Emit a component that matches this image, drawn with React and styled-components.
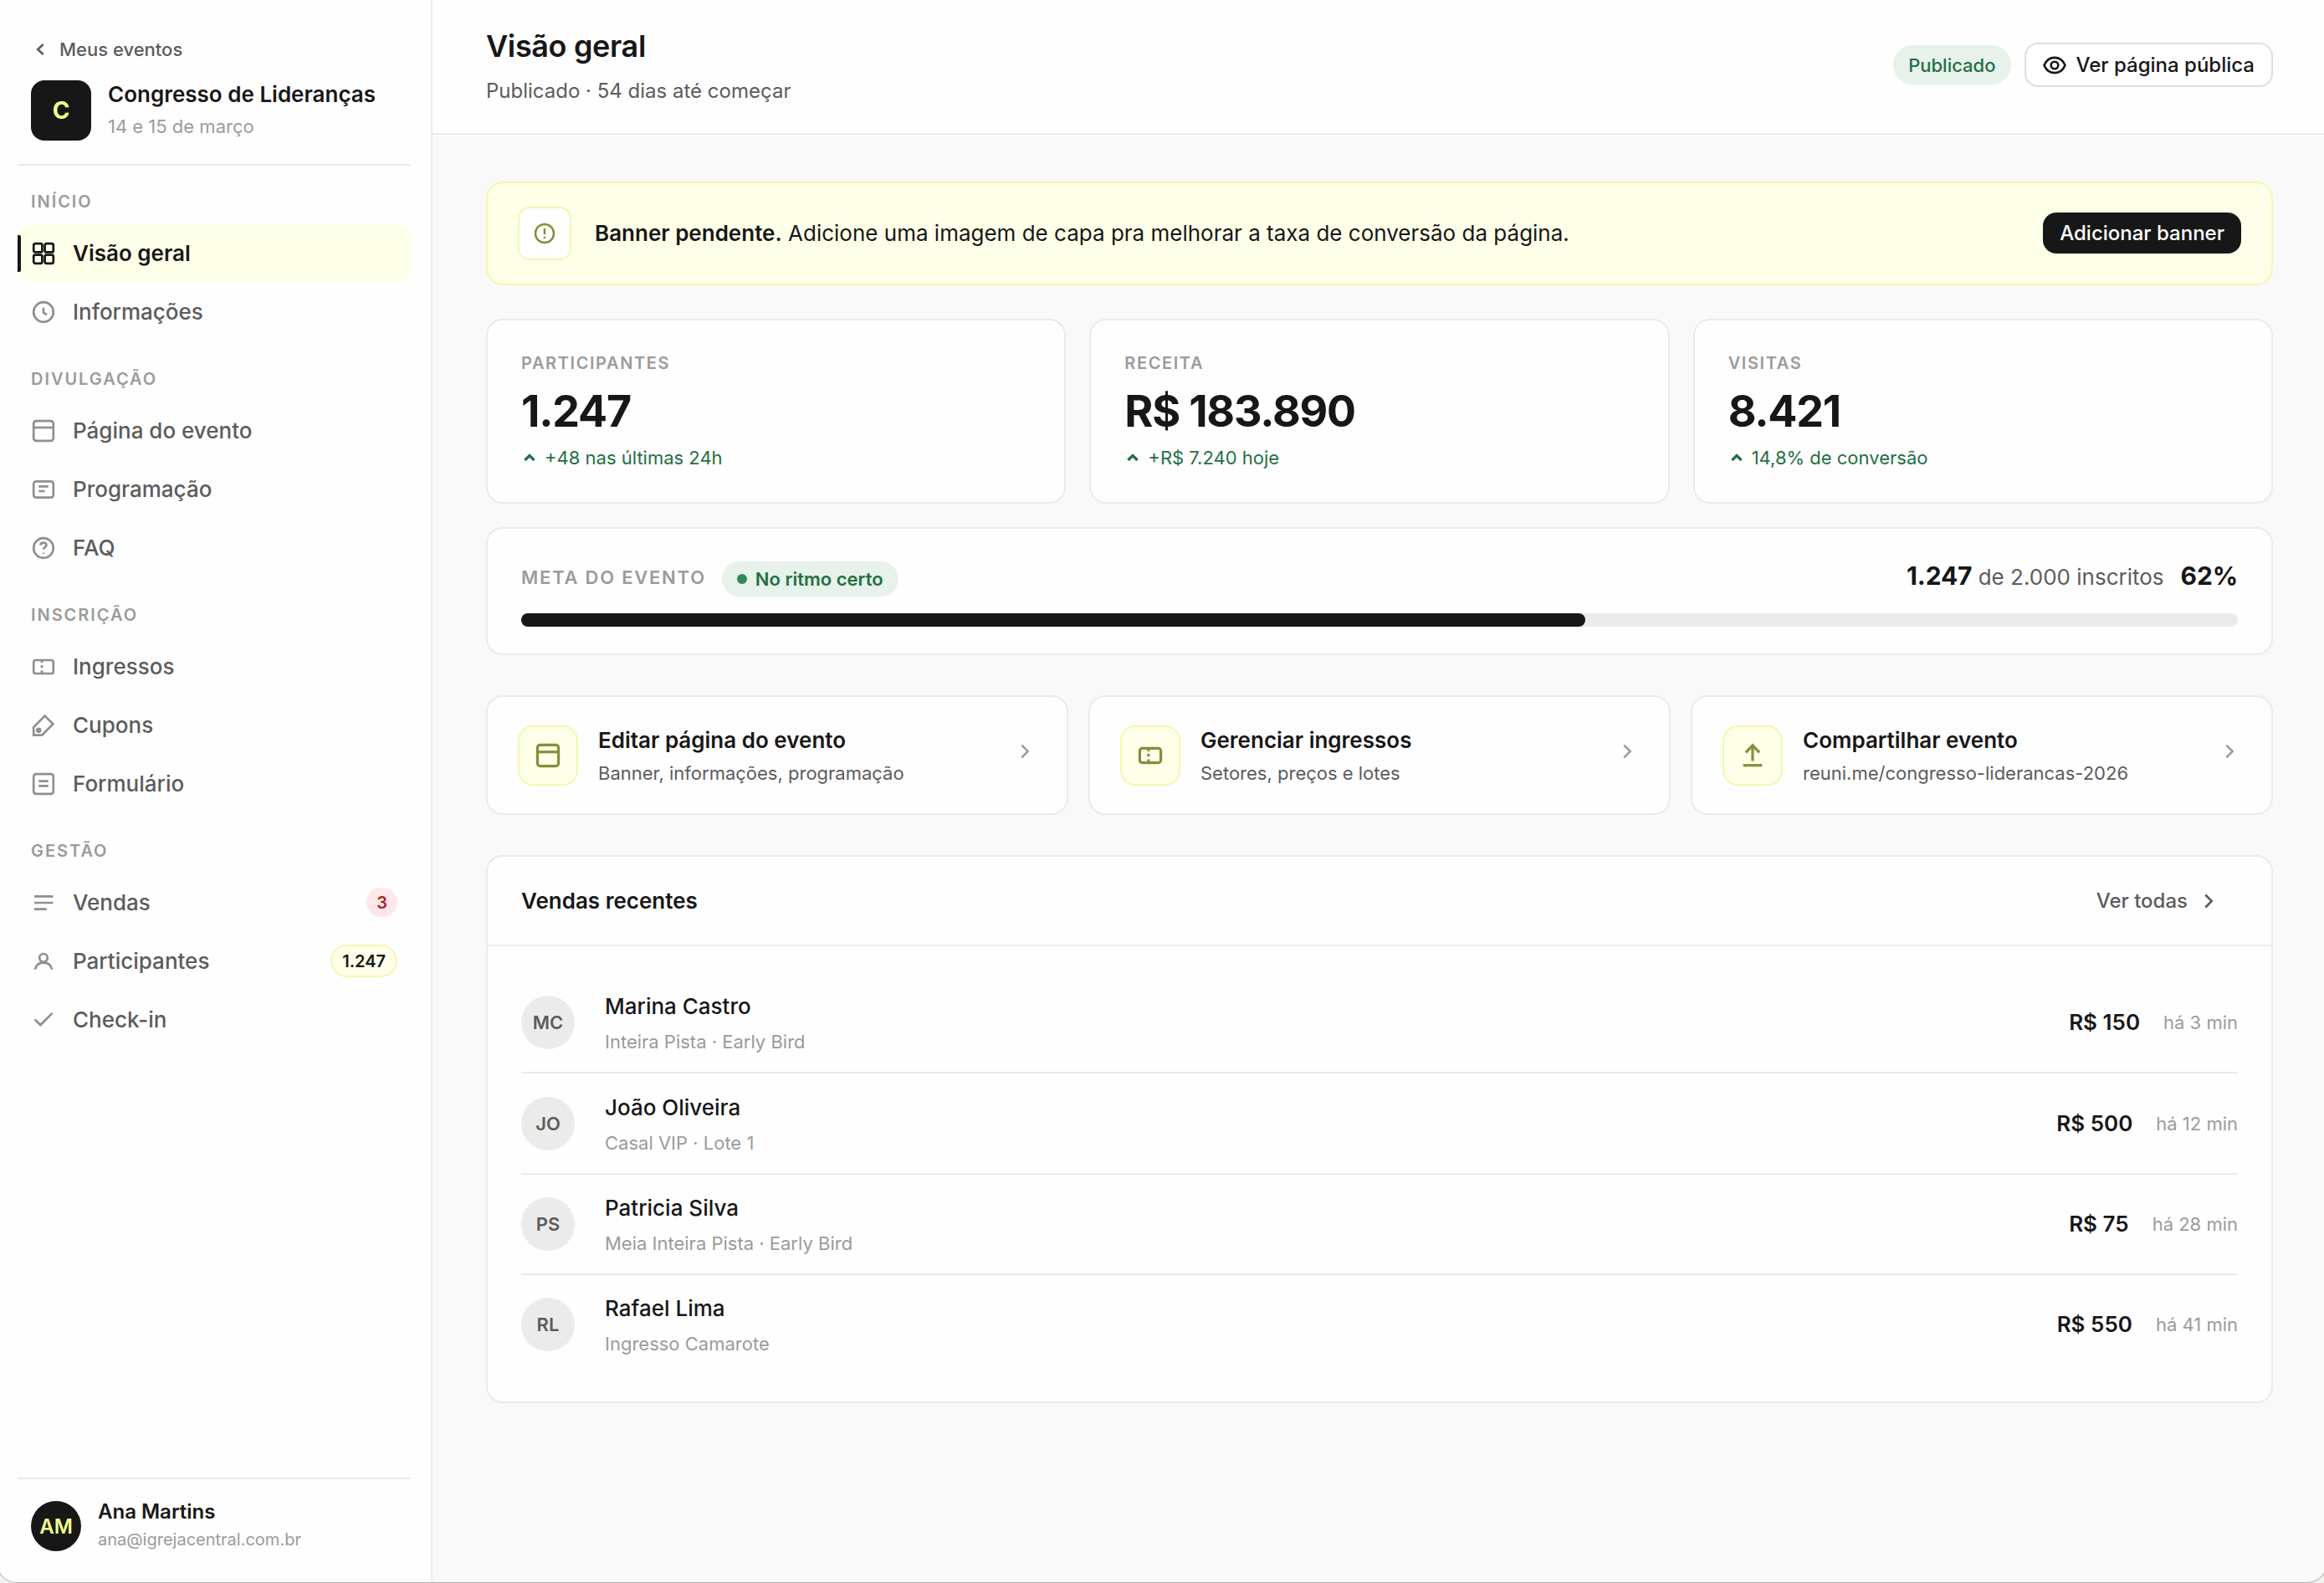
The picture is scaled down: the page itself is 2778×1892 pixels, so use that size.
import React from 'react';
import styled, { createGlobalStyle } from 'styled-components';

const GlobalStyle = createGlobalStyle`
  * {
    box-sizing: border-box;
  }

  html {
    background: #f3f3ef;
  }

  body {
    margin: 0;
    font-family: Inter, 'Liberation Sans', sans-serif;
    color: #171717;
    -webkit-font-smoothing: antialiased;
  }

  button {
    font-family: inherit;
  }
`;

const Viewport = styled.div`
  width: 2778px;
  height: 1892px;
  overflow: hidden;
`;

const Window = styled.div`
  display: flex;
  width: 2786px;
  height: 1892px;
  margin-left: -4px;
  border: 1px solid #b4b4b4;
  border-top: none;
  border-radius: 0 0 24px 24px;
  overflow: hidden;
  background: #f9f9f9;
`;

/* Sidebar */

const Sidebar = styled.aside`
  display: flex;
  flex-direction: column;
  flex: none;
  width: 520px;
  padding: 43px 24px 0;
  background: #fefefe;
  border-right: 2px solid #ebebeb;
`;

const SidebarHeader = styled.div`
  padding: 0 16px 28px;
  border-bottom: 2px solid #ebebeb;
`;

const BackLink = styled.a`
  display: flex;
  align-items: center;
  gap: 12px;
  margin-bottom: 21px;
  font-size: 22px;
  font-weight: 500;
  line-height: 32px;
  color: #5c5c5c;
`;

const EventInfo = styled.div`
  display: flex;
  align-items: center;
  gap: 20px;
  height: 72px;
`;

const EventLogo = styled.div`
  display: flex;
  align-items: center;
  justify-content: center;
  width: 72px;
  height: 72px;
  border-radius: 16px;
  background: #171717;
  color: #eeff8c;
  font-size: 28px;
  font-weight: 700;
`;

const EventText = styled.div`
  padding-bottom: 2px;
`;

const EventName = styled.div`
  font-size: 26px;
  font-weight: 600;
  line-height: 40px;
  white-space: nowrap;
`;

const EventDate = styled.div`
  font-size: 22px;
  line-height: 37px;
  color: #9b9b9b;
`;

const Nav = styled.nav`
  flex: 1;
`;

const NavGroup = styled.div`
  display: flex;
  flex-direction: column;
  gap: 2px;
`;

const NavLabel = styled.div`
  padding: ${({ $first }) => ($first ? '29px' : '32px')} 16px 12px;
  font-size: 20px;
  font-weight: 600;
  line-height: 28px;
  letter-spacing: 0.098em;
  text-transform: uppercase;
  color: #9b9b9b;
`;

const NavItem = styled.a`
  position: relative;
  display: flex;
  align-items: center;
  gap: 20px;
  height: 68px;
  padding: 0 16px;
  border-radius: 14px;
  font-size: 26px;
  font-weight: ${({ $active }) => ($active ? 600 : 500)};
  color: ${({ $active }) => ($active ? '#171717' : '#5c5c5c')};
  background: ${({ $active }) => ($active ? '#feffe8' : 'transparent')};

  svg {
    color: ${({ $active }) => ($active ? '#171717' : '#8f8f8f')};
  }
`;

const NavText = styled.span`
  padding-bottom: 2px;
`;

const ActiveMark = styled.span`
  position: absolute;
  left: 0;
  top: 12px;
  width: 4px;
  height: 44px;
  border-radius: 0 2px 2px 0;
  background: #171717;
`;

const NavBadge = styled.span`
  display: flex;
  align-items: center;
  justify-content: center;
  margin-left: auto;
  margin-bottom: 1px;
  height: ${({ $tone }) => ($tone === 'danger' ? '35px' : '39px')};
  padding: 0 12px;
  border-radius: 20px;
  border: ${({ $tone }) => ($tone === 'danger' ? 'none' : '2px solid #f4f7b0')};
  background: ${({ $tone }) => ($tone === 'danger' ? '#fde7e9' : '#feffe8')};
  color: ${({ $tone }) => ($tone === 'danger' ? '#a4262c' : '#171717')};
  font-size: 20px;
  font-weight: 600;
`;

const UserFooter = styled.div`
  display: flex;
  align-items: center;
  gap: 20px;
  padding: 26px 16px 37px;
  border-top: 2px solid #ebebeb;
`;

const UserAvatar = styled.div`
  display: flex;
  align-items: center;
  justify-content: center;
  width: 60px;
  height: 60px;
  border-radius: 50%;
  background: #171717;
  color: #eeff8c;
  font-size: 24px;
  font-weight: 600;
`;

const UserText = styled.div`
  height: 60px;
  margin-top: -9px;
`;

const UserName = styled.div`
  font-size: 24px;
  font-weight: 600;
  line-height: 34px;
`;

const UserEmail = styled.div`
  font-size: 20px;
  line-height: 32px;
  color: #9b9b9b;
`;

/* Main column */

const Main = styled.main`
  flex: 1;
  min-width: 0;
`;

const TopBar = styled.header`
  display: flex;
  align-items: center;
  justify-content: space-between;
  height: 161px;
  padding: 32px 64px 36px;
  background: #fefefe;
  border-bottom: 2px solid #ebebeb;
`;

const PageTitle = styled.h1`
  margin: 0 0 16px;
  font-size: 36px;
  font-weight: 600;
  line-height: 46px;
  letter-spacing: -0.01em;
`;

const PageSubtitle = styled.div`
  font-size: 24px;
  line-height: 30px;
  color: #5c5c5c;
`;

const TopActions = styled.div`
  display: flex;
  align-items: center;
  gap: 16px;
`;

const StatusPill = styled.span`
  display: flex;
  align-items: center;
  height: 47px;
  padding: 0 18px;
  border-radius: 24px;
  background: #e6f2ea;
  color: #256f45;
  font-size: 22px;
  font-weight: 500;
`;

const OutlineButton = styled.button`
  display: flex;
  align-items: center;
  gap: 12px;
  height: 53px;
  padding: 0 20px;
  border: 2px solid #dedede;
  border-radius: 16px;
  background: #fff;
  color: #171717;
  font-size: 24px;
  font-weight: 500;
`;

const Content = styled.div`
  padding: 56px 64px 0;
`;

const Notice = styled.div`
  display: flex;
  align-items: center;
  gap: 28px;
  height: 124px;
  padding: 0 36px;
  margin-bottom: 40px;
  border: 2px solid #f4f7b0;
  border-radius: 20px;
  background: #feffe8;
`;

const NoticeIcon = styled.div`
  display: flex;
  align-items: center;
  justify-content: center;
  width: 64px;
  height: 64px;
  border: 2px solid #f4f7b0;
  border-radius: 14px;
  background: #fff;
  color: #848f3c;
`;

const NoticeText = styled.div`
  flex: 1;
  padding-bottom: 2px;
  font-size: 26px;

  strong {
    font-weight: 600;
  }
`;

const DarkButton = styled.button`
  height: 49px;
  margin-bottom: 2px;
  padding: 0 20px;
  border: none;
  border-radius: 16px;
  background: #171717;
  color: #fff;
  font-size: 24px;
  font-weight: 500;
`;

const Card = styled.section`
  background: #fefefe;
  border: 2px solid #ebebeb;
  border-radius: 20px;
`;

const StatGrid = styled.div`
  display: grid;
  grid-template-columns: repeat(3, 1fr);
  gap: 28px;
  margin-bottom: 28px;
`;

const StatCard = styled(Card)`
  padding: 39px 40px 38px;
`;

const StatLabel = styled.div`
  margin-bottom: 16px;
  font-size: 20px;
  font-weight: 600;
  line-height: 24px;
  letter-spacing: 0.08em;
  text-transform: uppercase;
  color: #9b9b9b;
`;

const StatValue = styled.div`
  margin-bottom: 10px;
  font-size: 52px;
  font-weight: 700;
  line-height: 60px;
  letter-spacing: -0.0235em;
`;

const StatDelta = styled.div`
  display: flex;
  align-items: center;
  gap: 8px;
  font-size: 22px;
  line-height: 30px;
  color: #256f45;
`;

const GoalCard = styled(Card)`
  padding: 39px 40px 32px;
  margin-bottom: 48px;
`;

const GoalHeader = styled.div`
  display: flex;
  align-items: center;
  justify-content: space-between;
  height: 42px;
  margin-bottom: 20px;
`;

const GoalTitle = styled.div`
  display: flex;
  align-items: center;
  gap: 19px;
`;

const GoalLabel = styled.span`
  padding-bottom: 4px;
  font-size: 22px;
  font-weight: 600;
  letter-spacing: 0.08em;
  text-transform: uppercase;
  color: #9b9b9b;
`;

const GoalChip = styled.span`
  display: flex;
  align-items: center;
  gap: 10px;
  height: 42px;
  padding: 0 18px;
  border-radius: 21px;
  background: #e6f2ea;
  color: #256f45;
  font-size: 22px;
  font-weight: 600;

  &::before {
    content: '';
    width: 12px;
    height: 12px;
    border-radius: 50%;
    background: #2e8b57;
  }
`;

const GoalNumbers = styled.div`
  padding-bottom: 9px;
  font-size: 26px;
  color: #5c5c5c;

  strong {
    font-size: 30px;
    font-weight: 700;
    letter-spacing: -0.005em;
    color: #171717;
  }

  strong:last-child {
    margin-left: 20px;
  }
`;

const ProgressTrack = styled.div`
  height: 16px;
  border-radius: 8px;
  background: #ebebeb;
`;

const ProgressFill = styled.div`
  height: 100%;
  border-radius: 8px;
  background: #171717;
`;

const ActionGrid = styled.div`
  display: grid;
  grid-template-columns: repeat(3, 1fr);
  gap: 24px;
  margin-bottom: 48px;
`;

const ActionCard = styled(Card)`
  display: flex;
  align-items: center;
  gap: 24px;
  height: 143px;
  padding: 0 36px;
`;

const ActionIcon = styled.div`
  display: flex;
  align-items: center;
  justify-content: center;
  width: 72px;
  height: 72px;
  border: 2px solid #f4f7b0;
  border-radius: 18px;
  background: #feffe8;
  color: #848f3c;
`;

const ActionText = styled.div`
  flex: 1;
  padding-top: 4px;
`;

const ActionTitle = styled.div`
  font-size: 26px;
  font-weight: 600;
  line-height: 40px;
`;

const ActionSub = styled.div`
  font-size: 22px;
  line-height: 39px;
  color: #5c5c5c;
`;

const ActionArrow = styled.div`
  display: flex;
  padding-bottom: 10px;
  color: #9b9b9b;
`;

const SalesHeader = styled.div`
  display: flex;
  align-items: center;
  justify-content: space-between;
  height: 107px;
  padding: 0 61px 0 40px;
  border-bottom: 2px solid #ebebeb;
`;

const SalesTitle = styled.h2`
  margin: 0;
  font-size: 26px;
  font-weight: 600;
`;

const SeeAll = styled.a`
  display: flex;
  align-items: center;
  gap: 11px;
  font-size: 24px;
  font-weight: 500;
  color: #5c5c5c;
`;

const SalesList = styled.div`
  padding: 32px 40px;
`;

const SaleRow = styled.div`
  display: flex;
  align-items: center;
  height: 120.4px;
  border-bottom: 2px solid #ebebeb;

  &:last-child {
    height: 118.4px;
    border-bottom: none;
  }
`;

const BuyerAvatar = styled.div`
  display: flex;
  align-items: center;
  justify-content: center;
  width: 64px;
  height: 64px;
  margin-right: 36px;
  border-radius: 50%;
  background: #ebebeb;
  color: #5c5c5c;
  font-size: 22px;
  font-weight: 600;
`;

const Buyer = styled.div`
  flex: 1;
  padding-top: 3px;
`;

const BuyerName = styled.div`
  font-size: 26px;
  font-weight: 500;
  line-height: 43px;
`;

const BuyerTicket = styled.div`
  font-size: 22px;
  line-height: 42px;
  color: #9b9b9b;
`;

const SalePrice = styled.div`
  padding-bottom: 1px;
  font-size: 26px;
  font-weight: 600;
`;

const SaleTime = styled.div`
  margin-left: 28px;
  font-size: 22px;
  color: #9b9b9b;
`;

/* Icons, all drawn on a 30x30 grid */

const icons = {
  grid: (
    <>
      <rect x="3.2" y="3.2" width="10.2" height="10.2" rx="2" />
      <rect x="16.6" y="3.2" width="10.2" height="10.2" rx="2" />
      <rect x="3.2" y="16.6" width="10.2" height="10.2" rx="2" />
      <rect x="16.6" y="16.6" width="10.2" height="10.2" rx="2" />
    </>
  ),
  clock: (
    <>
      <circle cx="15" cy="15" r="11.8" />
      <path d="M15 9.8V15.8L19 18" />
    </>
  ),
  page: (
    <>
      <rect x="3.2" y="3.2" width="23.6" height="23.6" rx="3" />
      <path d="M3.2 11H26.8" />
    </>
  ),
  schedule: (
    <>
      <rect x="3.2" y="5.4" width="23.6" height="19.2" rx="3" />
      <path d="M9.2 11.4H20.8M9.2 17H16.6" />
    </>
  ),
  help: (
    <>
      <circle cx="15" cy="15" r="11.8" />
      <path d="M11.4 11.6C11.6 9.6 13 8.6 14.9 8.6C16.9 8.6 18.4 9.8 18.4 11.6C18.4 14.2 15 14 15 16.8" />
      <path d="M13.6 21.2H16.4" strokeWidth="1.2" />
    </>
  ),
  ticket: (
    <>
      <rect x="3.2" y="7" width="23.6" height="16" rx="2.6" />
      <path d="M13 7.2V23" strokeDasharray="3 3" />
    </>
  ),
  tag: (
    <>
      <path d="M16.6 3.6L26.4 13.2L13.2 26.6H3.2V17Z" />
      <circle cx="9.2" cy="20.7" r="3.2" fill="currentColor" stroke="none" />
    </>
  ),
  form: (
    <>
      <rect x="3.2" y="3.2" width="23.6" height="23.6" rx="3" />
      <path d="M9.2 11.6H20.8M9.2 17.4H20.8" />
    </>
  ),
  list: <path d="M4 7.3H26.4M4 15H26.4M4 22.7H18.8" />,
  person: (
    <>
      <circle cx="15" cy="10.8" r="4.8" />
      <path d="M4.8 24.8C6 19.4 10 16.6 15 16.6C20 16.6 24 19.4 25.2 24.8" />
    </>
  ),
  check: <path d="M5.4 15.2L11.4 21L24.8 7.6" strokeLinecap="round" />,
  alert: (
    <>
      <circle cx="15" cy="15" r="11.8" />
      <path d="M15 8.6V16.4M15 19V21.4" />
    </>
  ),
  eye: (
    <>
      <path d="M1.6 15C4.2 8.8 9 5.2 15 5.2C21 5.2 25.8 8.8 28.4 15C25.8 21.2 21 24.8 15 24.8C9 24.8 4.2 21.2 1.6 15Z" />
      <circle cx="15" cy="15" r="4.6" />
    </>
  ),
  share: (
    <>
      <path d="M15 21V3.6M7.4 11.6L15 3.6L22.6 11.6" />
      <path d="M4.4 26H25.6" />
    </>
  ),
  chevronLeft: <path d="M20 6.8L11.2 15L20 23.2" />,
  chevronRight: <path d="M11 7L19 15L11 23" />,
  chevronUp: <path d="M6.6 19.6L15 11.4L23.4 19.6" />,
};

function Icon({ name, size = 30, weight = 2.7 }) {
  return (
    <svg
      width={size}
      height={size}
      viewBox="0 0 30 30"
      fill="none"
      stroke="currentColor"
      strokeWidth={weight}
    >
      {icons[name]}
    </svg>
  );
}

const navGroups = [
  {
    label: 'Início',
    items: [
      { icon: 'grid', text: 'Visão geral', active: true },
      { icon: 'clock', text: 'Informações' },
    ],
  },
  {
    label: 'Divulgação',
    items: [
      { icon: 'page', text: 'Página do evento' },
      { icon: 'schedule', text: 'Programação' },
      { icon: 'help', text: 'FAQ' },
    ],
  },
  {
    label: 'Inscrição',
    items: [
      { icon: 'ticket', text: 'Ingressos' },
      { icon: 'tag', text: 'Cupons' },
      { icon: 'form', text: 'Formulário' },
    ],
  },
  {
    label: 'Gestão',
    items: [
      { icon: 'list', text: 'Vendas', badge: '3', tone: 'danger' },
      { icon: 'person', text: 'Participantes', badge: '1.247', tone: 'brand' },
      { icon: 'check', text: 'Check-in' },
    ],
  },
];

const stats = [
  { label: 'Participantes', value: '1.247', delta: '+48 nas últimas 24h' },
  { label: 'Receita', value: 'R$ 183.890', delta: '+R$ 7.240 hoje' },
  { label: 'Visitas', value: '8.421', delta: '14,8% de conversão' },
];

const actions = [
  { icon: 'page', title: 'Editar página do evento', sub: 'Banner, informações, programação' },
  { icon: 'ticket', title: 'Gerenciar ingressos', sub: 'Setores, preços e lotes' },
  { icon: 'share', title: 'Compartilhar evento', sub: 'reuni.me/congresso-liderancas-2026' },
];

const sales = [
  { initials: 'MC', name: 'Marina Castro', ticket: 'Inteira Pista · Early Bird', price: 'R$ 150', time: 'há 3 min' },
  { initials: 'JO', name: 'João Oliveira', ticket: 'Casal VIP · Lote 1', price: 'R$ 500', time: 'há 12 min' },
  { initials: 'PS', name: 'Patricia Silva', ticket: 'Meia Inteira Pista · Early Bird', price: 'R$ 75', time: 'há 28 min' },
  { initials: 'RL', name: 'Rafael Lima', ticket: 'Ingresso Camarote', price: 'R$ 550', time: 'há 41 min' },
];

const goalPercent = 62;

function App() {
  return (
    <Viewport>
      <GlobalStyle />
      <Window>
        <Sidebar>
          <SidebarHeader>
            <BackLink>
              <Icon name="chevronLeft" size={22} weight={3.6} />
              Meus eventos
            </BackLink>
            <EventInfo>
              <EventLogo>C</EventLogo>
              <EventText>
                <EventName>Congresso de Lideranças</EventName>
                <EventDate>14 e 15 de março</EventDate>
              </EventText>
            </EventInfo>
          </SidebarHeader>

          <Nav>
            {navGroups.map((group, i) => (
              <NavGroup key={group.label}>
                <NavLabel $first={i === 0}>{group.label}</NavLabel>
                {group.items.map((item) => (
                  <NavItem key={item.text} $active={item.active}>
                    {item.active && <ActiveMark />}
                    <Icon name={item.icon} />
                    <NavText>{item.text}</NavText>
                    {item.badge && <NavBadge $tone={item.tone}>{item.badge}</NavBadge>}
                  </NavItem>
                ))}
              </NavGroup>
            ))}
          </Nav>

          <UserFooter>
            <UserAvatar>AM</UserAvatar>
            <UserText>
              <UserName>Ana Martins</UserName>
              <UserEmail>ana@igrejacentral.com.br</UserEmail>
            </UserText>
          </UserFooter>
        </Sidebar>

        <Main>
          <TopBar>
            <div>
              <PageTitle>Visão geral</PageTitle>
              <PageSubtitle>Publicado · 54 dias até começar</PageSubtitle>
            </div>
            <TopActions>
              <StatusPill>Publicado</StatusPill>
              <OutlineButton>
                <Icon name="eye" size={28} weight={2.8} />
                Ver página pública
              </OutlineButton>
            </TopActions>
          </TopBar>

          <Content>
            <Notice>
              <NoticeIcon>
                <Icon name="alert" size={28} weight={2.7} />
              </NoticeIcon>
              <NoticeText>
                <strong>Banner pendente.</strong> Adicione uma imagem de capa pra melhorar a taxa de
                conversão da página.
              </NoticeText>
              <DarkButton>Adicionar banner</DarkButton>
            </Notice>

            <StatGrid>
              {stats.map((stat) => (
                <StatCard key={stat.label}>
                  <StatLabel>{stat.label}</StatLabel>
                  <StatValue>{stat.value}</StatValue>
                  <StatDelta>
                    <Icon name="chevronUp" size={20} weight={5} />
                    {stat.delta}
                  </StatDelta>
                </StatCard>
              ))}
            </StatGrid>

            <GoalCard>
              <GoalHeader>
                <GoalTitle>
                  <GoalLabel>Meta do evento</GoalLabel>
                  <GoalChip>No ritmo certo</GoalChip>
                </GoalTitle>
                <GoalNumbers>
                  <strong>1.247</strong> de 2.000 inscritos<strong>{goalPercent}%</strong>
                </GoalNumbers>
              </GoalHeader>
              <ProgressTrack>
                <ProgressFill style={{ width: `${goalPercent}%` }} />
              </ProgressTrack>
            </GoalCard>

            <ActionGrid>
              {actions.map((action) => (
                <ActionCard key={action.title}>
                  <ActionIcon>
                    <Icon name={action.icon} size={32} weight={3} />
                  </ActionIcon>
                  <ActionText>
                    <ActionTitle>{action.title}</ActionTitle>
                    <ActionSub>{action.sub}</ActionSub>
                  </ActionText>
                  <ActionArrow>
                    <Icon name="chevronRight" size={28} />
                  </ActionArrow>
                </ActionCard>
              ))}
            </ActionGrid>

            <Card>
              <SalesHeader>
                <SalesTitle>Vendas recentes</SalesTitle>
                <SeeAll>
                  Ver todas
                  <Icon name="chevronRight" size={28} weight={2.8} />
                </SeeAll>
              </SalesHeader>
              <SalesList>
                {sales.map((sale) => (
                  <SaleRow key={sale.name}>
                    <BuyerAvatar>{sale.initials}</BuyerAvatar>
                    <Buyer>
                      <BuyerName>{sale.name}</BuyerName>
                      <BuyerTicket>{sale.ticket}</BuyerTicket>
                    </Buyer>
                    <SalePrice>{sale.price}</SalePrice>
                    <SaleTime>{sale.time}</SaleTime>
                  </SaleRow>
                ))}
              </SalesList>
            </Card>
          </Content>
        </Main>
      </Window>
    </Viewport>
  );
}

export default App;
